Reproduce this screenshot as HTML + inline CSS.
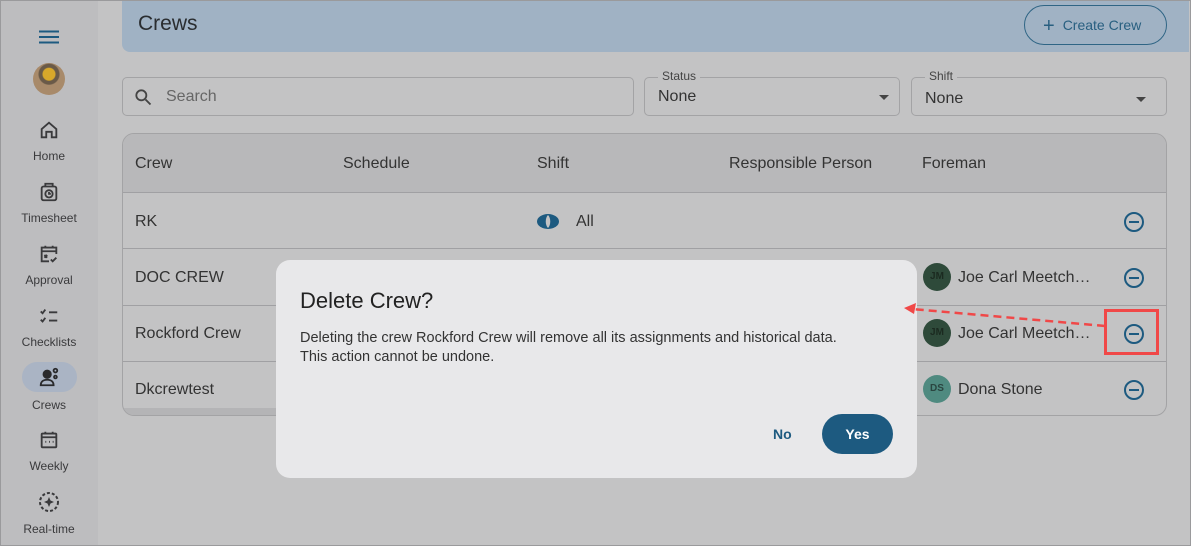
<!DOCTYPE html>
<html><head><meta charset="utf-8"><style>
*{box-sizing:border-box;margin:0;padding:0}
body{width:1191px;height:546px;overflow:hidden;font-family:"Liberation Sans",sans-serif;background:#c3c3c4;position:relative;color:#333}
.frame{position:absolute;inset:0;border:1px solid #9a9a9c;z-index:50;pointer-events:none}
.side{position:absolute;left:0;top:0;width:98px;height:546px;background:#bdbdbf}
.nav{position:absolute;left:0;width:98px;text-align:center;font-size:12px;color:#3a3a3c}
.nav svg{display:block;margin:0 auto 8px}
.hdr{position:absolute;left:122px;top:0;width:1067px;height:52px;background:#a0b2c4;border-radius:0 0 0 8px}
.hdr h1{position:absolute;left:16px;top:12px;font-size:21px;font-weight:normal;color:#2a2d30}
.cbtn{position:absolute;left:902px;top:5px;width:143px;height:40px;border:1px solid #2f6585;border-radius:20px;color:#285f80;font-size:14px;line-height:38px;padding-left:18px}
.fld{position:absolute;top:77px;height:39px;border:1px solid #a3a3a5;border-radius:5px}
.lbl{position:absolute;top:-9px;left:13px;background:#c3c3c4;padding:0 4px;font-size:12px;color:#444}
.val{position:absolute;left:13px;font-size:16px;color:#333}
.tri{position:absolute;width:0;height:0;border-left:5px solid transparent;border-right:5px solid transparent;border-top:5px solid #444}
.tbl{position:absolute;left:122px;top:133px;width:1045px;height:283px;border:1px solid #a3a3a5;border-radius:12px;overflow:hidden}
.th{position:absolute;left:0;top:0;width:100%;height:59px;background:#b8b8ba;border-bottom:1px solid #a0a0a3}
.c{position:absolute;font-size:16px;color:#333}
.row{position:absolute;left:0;width:100%;height:56px;border-bottom:1px solid #a0a0a3}
.min{position:absolute;left:1001px;width:20px;height:20px;border:2px solid #1d5a80;border-radius:50%}
.min:after{content:"";position:absolute;left:3px;top:7px;width:10px;height:2px;background:#1d5a80}
.av{position:absolute;left:800px;width:28px;height:28px;border-radius:50%;font-size:10px;font-weight:bold;text-align:center;line-height:28px}
.dlg{position:absolute;left:276px;top:260px;width:641px;height:218px;background:#e8e8ea;border-radius:14px;z-index:10}
</style></head><body>
<div class="side">
<svg style="position:absolute;left:39px;top:30px" width="20" height="14"><path d="M0 1.5h20M0 7h20M0 12.5h20" stroke="#1d5a80" stroke-width="2"/></svg>
<div style="position:absolute;left:33px;top:63px;width:32px;height:32px;border-radius:50%;background:radial-gradient(circle at 50% 35%,#d8a82a 0 6px,#6a5a48 7px 10px,#a88a6a 11px)"></div>
<div class="nav" style="top:119px"><svg width="22" height="22" viewBox="0 0 24 24" fill="none" stroke="#3a3a3c" stroke-width="2"><path d="M4 11L12 4l8 7v9h-5v-6h-6v6H4z"/></svg>Home</div>
<div class="nav" style="top:181px"><svg width="22" height="22" viewBox="0 0 24 24" fill="none" stroke="#3a3a3c" stroke-width="2"><rect x="4" y="6" width="16" height="15" rx="2"/><path d="M8 6V3h8v3"/><circle cx="12" cy="14" r="4"/><path d="M12 12v2h2"/></svg>Timesheet</div>
<div class="nav" style="top:243px"><svg width="22" height="22" viewBox="0 0 24 24" fill="none" stroke="#3a3a3c" stroke-width="2"><path d="M20 12V5H4v15h8M4 9h16M8 3v3M16 3v3M7 13l3 3M10 13l-3 3M14 18l2 2 4-4"/></svg>Approval</div>
<div class="nav" style="top:305px"><svg width="22" height="22" viewBox="0 0 24 24" fill="none" stroke="#3a3a3c" stroke-width="2"><path d="M3 7l2 2 3-4M3 16l2 2 3-4M12 8h9M12 17h9"/></svg>Checklists</div>
<div style="position:absolute;left:22px;top:362px;width:55px;height:30px;border-radius:15px;background:#aab4c4"></div>
<div class="nav" style="top:366px"><svg width="24" height="22" viewBox="0 0 24 24" fill="none" stroke="#2a2a2c" stroke-width="2"><circle cx="10" cy="9" r="4" fill="#2a2a2c"/><path d="M3 21c0-4 3-6 7-6s7 2 7 6z"/><circle cx="19" cy="5" r="2"/><circle cx="19" cy="12" r="1.5"/></svg><span style="position:relative;top:2px">Crews</span></div>
<div class="nav" style="top:429px"><svg width="22" height="22" viewBox="0 0 24 24" fill="none" stroke="#3a3a3c" stroke-width="2"><rect x="4" y="5" width="16" height="15" rx="1"/><path d="M4 9h16M8 3v3M16 3v3M8 14h1M12 14h1M16 14h1"/></svg>Weekly</div>
<div class="nav" style="top:490px"><svg width="24" height="24" viewBox="0 0 24 24" fill="none" stroke="#3a3a3c" stroke-width="2"><circle cx="12" cy="12" r="9" stroke-dasharray="3 2"/><path d="M12 7l1.5 3.5L17 12l-3.5 1.5L12 17l-1.5-3.5L7 12l3.5-1.5z" fill="#3a3a3c" stroke="none"/></svg>Real-time</div>
</div>
<div class="hdr"><h1>Crews</h1><div class="cbtn"><span style="font-size:20px;vertical-align:-2px;margin-right:8px">+</span>Create Crew</div></div>
<div class="fld" style="left:122px;width:512px"><svg style="position:absolute;left:10px;top:9px" width="20" height="20" viewBox="0 0 24 24" fill="none" stroke="#444" stroke-width="2.2"><circle cx="10" cy="10" r="6"/><path d="M15 15l6 6"/></svg><span class="val" style="left:43px;top:10px;color:#666">Search</span></div>
<div class="fld" style="left:644px;width:256px"><span class="lbl">Status</span><span class="val" style="top:10px">None</span><div class="tri" style="left:234px;top:17px"></div></div>
<div class="fld" style="left:911px;width:256px"><span class="lbl">Shift</span><span class="val" style="top:12px">None</span><div class="tri" style="left:224px;top:19px"></div></div>
<div class="tbl">
<div class="th"><span class="c" style="left:12px;top:21px">Crew</span><span class="c" style="left:220px;top:21px">Schedule</span><span class="c" style="left:414px;top:21px">Shift</span><span class="c" style="left:606px;top:21px">Responsible Person</span><span class="c" style="left:799px;top:21px">Foreman</span></div>
<div class="row" style="top:59px"><span class="c" style="left:12px;top:20px">RK</span><svg style="position:absolute;left:414px;top:21px" width="22" height="15"><ellipse cx="11" cy="7.5" rx="11" ry="7.5" fill="#1d5a80"/><path d="M11 1c-3 3-3 10 0 13c3-3 3-10 0-13z" fill="#c3c3c4"/></svg><span class="c" style="left:453px;top:20px">All</span><div class="min" style="top:19px"></div></div>
<div class="row" style="top:116px"><span class="c" style="left:12px;top:19px">DOC CREW</span><div class="av" style="top:13px;background:#2e4a3a;color:#1b2a20">JM</div><span class="c" style="left:835px;top:19px">Joe Carl Meetch…</span><div class="min" style="top:18px"></div></div>
<div class="row" style="top:172px"><span class="c" style="left:12px;top:19px">Rockford Crew</span><div class="av" style="top:13px;background:#2e4a3a;color:#1b2a20">JM</div><span class="c" style="left:835px;top:19px">Joe Carl Meetch…</span><div class="min" style="top:18px"></div></div>
<div class="row" style="top:228px;border:none"><span class="c" style="left:12px;top:19px">Dkcrewtest</span><div class="av" style="top:13px;background:#4f8a80;color:#2a4540">DS</div><span class="c" style="left:835px;top:19px">Dona Stone</span><div class="min" style="top:18px"></div></div>
<div style="position:absolute;left:0;top:274px;width:160px;height:8px;background:#b4b4b6"></div>
</div>
<div class="dlg">
<div style="position:absolute;left:24px;top:28px;font-size:22px;color:#222">Delete Crew?</div>
<div style="position:absolute;left:24px;top:69px;width:600px;font-size:14.5px;line-height:19px;color:#333">Deleting the crew Rockford Crew will remove all its assignments and historical data.<br>This action cannot be undone.</div>
<div style="position:absolute;left:497px;top:166px;font-size:14px;font-weight:bold;color:#1d5a80">No</div>
<div style="position:absolute;left:546px;top:154px;width:71px;height:40px;border-radius:20px;background:#1d5a80;color:#fff;font-size:14px;font-weight:bold;text-align:center;line-height:40px">Yes</div>
</div>
<svg style="position:absolute;left:0;top:0;z-index:20" width="1191" height="546"><path d="M1105 326L912 309" stroke="#f04848" stroke-width="2.5" stroke-dasharray="8 5"/><path d="M904 308l12-5-2 11z" fill="#f04848"/><rect x="1105.5" y="310.5" width="52" height="43" fill="none" stroke="#f04848" stroke-width="3"/></svg>
<div class="frame"></div>
</body></html>
